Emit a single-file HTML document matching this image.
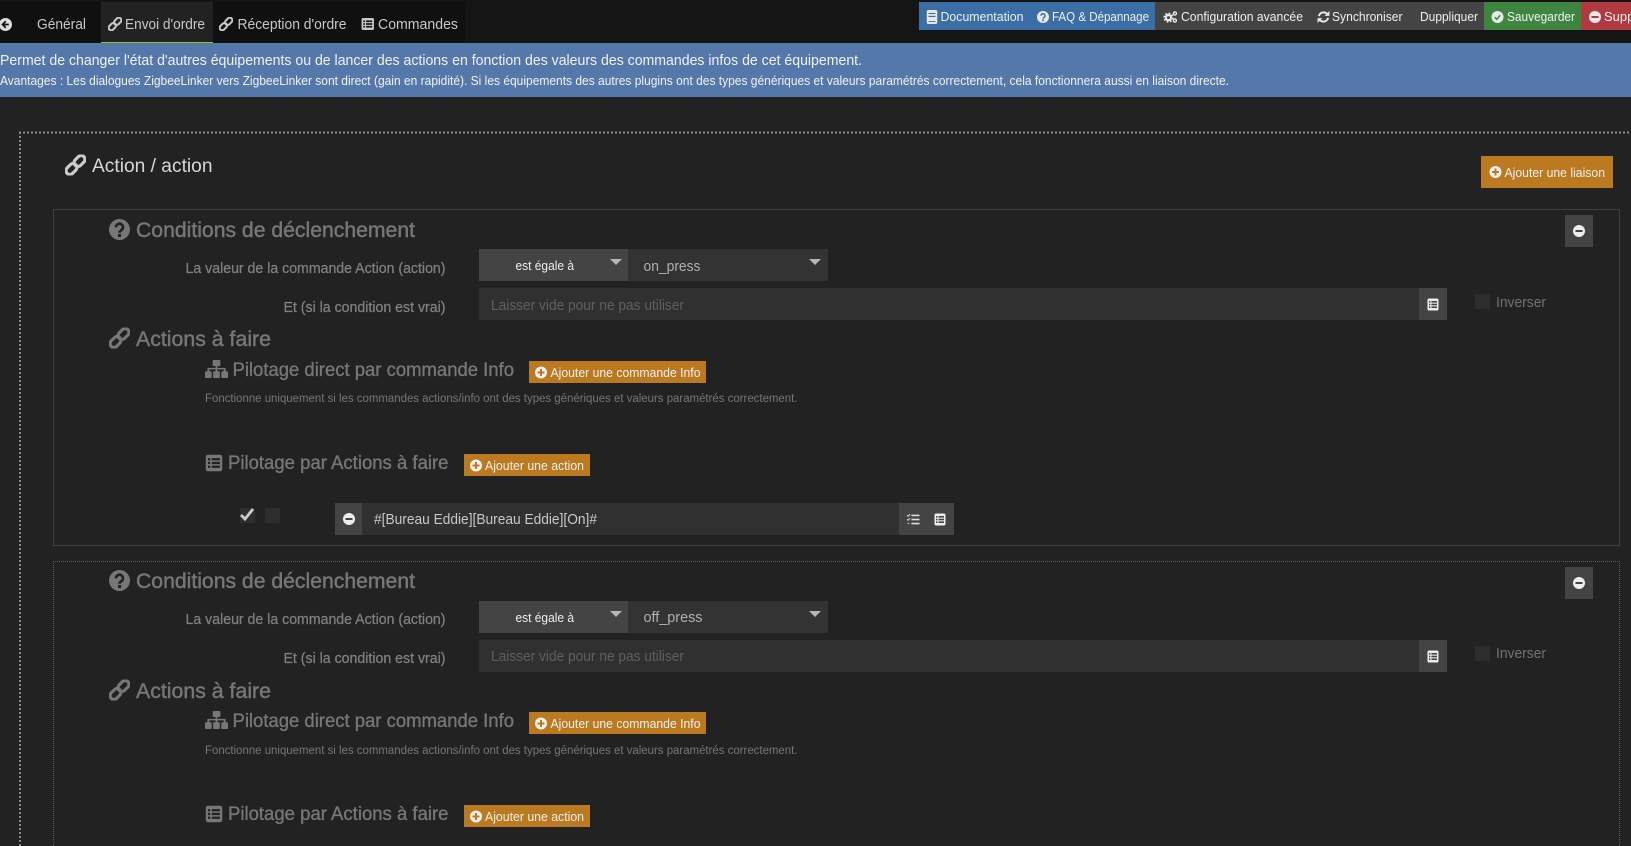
<!DOCTYPE html>
<html lang="fr"><head><meta charset="utf-8"><title>Envoi d'ordre</title>
<style>
html,body{margin:0;padding:0;background:#222;width:1631px;height:846px;overflow:hidden}
svg{display:block}
text{font-family:"Liberation Sans",Arial,sans-serif;white-space:pre}
.h{font-size:21.5px;fill:#777;stroke:#777;stroke-width:.45}
.s{font-size:19px;fill:#777;stroke:#777;stroke-width:.35}
.l{font-size:14.5px;fill:#808080;stroke:#808080;stroke-width:.25}
.b{font-size:13px;fill:#f0f0f0}
.t{font-size:15px;fill:#c8c8c8}
.p{font-size:15px;fill:#5f5f5f}
.n{font-size:11.5px;fill:#777}
.i{font-size:15px;fill:#727272}
.v{font-size:15px;fill:#b0b0b0}
.e{font-size:13px;fill:#eee}
</style></head><body>
<svg xmlns="http://www.w3.org/2000/svg" width="1631" height="846" viewBox="0 0 1631 846">
<defs>
<symbol id="link" viewBox="0 0 24 24"><g fill="none" stroke="currentColor" stroke-width="3.6" transform="rotate(-45 12 12)"><rect x="-1.5" y="7.6" width="14" height="8.8" rx="4.4"/><rect x="11.5" y="7.6" width="14" height="8.8" rx="4.4"/></g></symbol>
<symbol id="q" viewBox="0 0 24 24"><circle cx="12" cy="12" r="12" fill="currentColor"/><path d="M8 9.5a4 4 0 1 1 6.3 3.2c-1.4.9-2.3 1.4-2.3 3" fill="none" stroke="var(--b)" stroke-width="3"/><rect x="10.3" y="17.2" width="3.4" height="3.4" fill="var(--b)"/></symbol>
<symbol id="plus" viewBox="0 0 24 24"><circle cx="12" cy="12" r="12" fill="currentColor"/><rect x="10" y="5" width="4" height="14" fill="var(--b)"/><rect x="5" y="10" width="14" height="4" fill="var(--b)"/></symbol>
<symbol id="minus" viewBox="0 0 24 24"><circle cx="12" cy="12" r="12" fill="currentColor"/><rect x="5" y="10" width="14" height="4" fill="var(--b)"/></symbol>
<symbol id="ok" viewBox="0 0 24 24"><circle cx="12" cy="12" r="12" fill="currentColor"/><path d="M6.5 12.5l4 4 7-8" fill="none" stroke="var(--b)" stroke-width="3"/></symbol>
<symbol id="back" viewBox="0 0 24 24"><circle cx="12" cy="12" r="12" fill="currentColor"/><path d="M12.5 6L6.5 12l6 6M7 12h11" fill="none" stroke="var(--b)" stroke-width="3.2"/></symbol>
<symbol id="list" viewBox="0 0 24 24" preserveAspectRatio="none"><rect x="1" y="1" width="22" height="22" rx="3" fill="currentColor"/><g fill="var(--b)"><rect x="4" y="5.5" width="3" height="3"/><rect x="9" y="5.5" width="11" height="3"/><rect x="4" y="10.5" width="3" height="3"/><rect x="9" y="10.5" width="11" height="3"/><rect x="4" y="15.5" width="3" height="3"/><rect x="9" y="15.5" width="11" height="3"/></g></symbol>
<symbol id="map" viewBox="0 0 24 24" preserveAspectRatio="none"><g fill="currentColor"><rect x="8" y="0" width="8" height="8" rx="1"/><rect x="0" y="15" width="7" height="9" rx="1"/><rect x="8.5" y="15" width="7" height="9" rx="1"/><rect x="17" y="15" width="7" height="9" rx="1"/></g><path d="M12 8v8M3.5 16v-4.5h17V16" fill="none" stroke="currentColor" stroke-width="2"/></symbol>
<symbol id="book" viewBox="0 0 24 24"><rect x="3" y="0" width="18" height="24" rx="3" fill="currentColor"/><g fill="var(--b)"><rect x="6" y="5" width="12" height="2"/><rect x="6" y="10" width="12" height="2"/><rect x="6" y="19" width="12" height="1.5"/></g></symbol>
<symbol id="cogs" viewBox="0 0 24 24"><g fill="none" stroke="currentColor"><circle cx="8.5" cy="13" r="4.5" stroke-width="4"/><circle cx="8.5" cy="13" r="7.5" stroke-width="2.5" stroke-dasharray="3 2.9"/><circle cx="19.5" cy="6" r="2.6" stroke-width="2.4"/><circle cx="19.5" cy="18" r="2.6" stroke-width="2.4"/></g></symbol>
<symbol id="sync" viewBox="0 0 24 24"><path d="M3.5 10.5a9 9 0 0 1 15-4.5M20.5 13.5a9 9 0 0 1-15 4.5" fill="none" stroke="currentColor" stroke-width="3.6"/><path d="M23 1v9h-9zM1 23v-9h9z" fill="currentColor"/></symbol>
<symbol id="tasks" viewBox="0 0 24 24"><g fill="currentColor"><rect x="9" y="3" width="15" height="3"/><rect x="9" y="10.5" width="15" height="3"/><rect x="9" y="18" width="15" height="3"/></g><path d="M1 4l2 2 3.5-4M1 11.5l2 2 3.5-4M2 19.5h3" fill="none" stroke="currentColor" stroke-width="1.8"/></symbol>
</defs>

<rect width="1631" height="846" fill="#222"/>
<rect width="1631" height="43" fill="#151515"/>
<rect x="0" y="2" width="465" height="41" fill="#101010"/>
<rect x="101" y="2" width="112" height="41" fill="#222"/>
<rect x="101" y="42" width="112" height="2" fill="#94c11f"/>
<rect y="43" width="1631" height="54" fill="#5578ab"/>

<use href="#back" x="-1" y="18" width="13" height="13" style="color:#ddd;--b:#101010"/>
<text class="t" x="37" y="29" textLength="49" lengthAdjust="spacingAndGlyphs">Général</text>
<use href="#link" x="108" y="17" width="14" height="14" style="color:#c8c8c8"/>
<text class="t" x="125" y="29" textLength="80" lengthAdjust="spacingAndGlyphs">Envoi d'ordre</text>
<use href="#link" x="219" y="17" width="14" height="14" style="color:#c8c8c8"/>
<text class="t" x="237.5" y="29" textLength="109" lengthAdjust="spacingAndGlyphs">Réception d'ordre</text>
<use href="#list" x="361" y="17.5" width="13.5" height="13" style="color:#c8c8c8;--b:#101010"/>
<text class="t" x="378" y="29" textLength="80" lengthAdjust="spacingAndGlyphs">Commandes</text>

<rect x="919" y="2" width="236" height="28" fill="#3a6ea5"/>
<rect x="1155" y="2" width="329" height="28" fill="#444"/>
<rect x="1484" y="2" width="97" height="28" fill="#3f8540"/>
<rect x="1581" y="2" width="50" height="28" fill="#b13a40"/>

<use href="#book" x="925" y="10" width="14" height="14" style="color:#e8e8e8;--b:#3a6ea5"/>
<text class="b" x="940.5" y="21" textLength="83" lengthAdjust="spacingAndGlyphs">Documentation</text>
<use href="#q" x="1037" y="11" width="12" height="12" style="color:#e8e8e8;--b:#3a6ea5"/>
<text class="b" x="1052" y="21" textLength="97" lengthAdjust="spacingAndGlyphs">FAQ &amp; Dépannage</text>
<use href="#cogs" x="1163" y="10" width="15" height="14" style="color:#e8e8e8"/>
<text class="b" x="1181" y="21" textLength="122" lengthAdjust="spacingAndGlyphs">Configuration avancée</text>
<use href="#sync" x="1317" y="10.5" width="13" height="13" style="color:#e8e8e8"/>
<text class="b" x="1332" y="21" textLength="70.5" lengthAdjust="spacingAndGlyphs">Synchroniser</text>
<text class="b" x="1420" y="21" textLength="58" lengthAdjust="spacingAndGlyphs">Duppliquer</text>
<use href="#ok" x="1491.5" y="11" width="12" height="12" style="color:#e8e8e8;--b:#3f8540"/>
<text class="b" x="1507" y="21" textLength="68" lengthAdjust="spacingAndGlyphs">Sauvegarder</text>
<use href="#minus" x="1589" y="11" width="12" height="12" style="color:#e8e8e8;--b:#b13a40"/>
<text class="b" x="1604" y="21" textLength="60" lengthAdjust="spacingAndGlyphs">Supprimer</text>

<text x="0" y="65" font-size="15" fill="#f2f2f2" textLength="862" lengthAdjust="spacingAndGlyphs">Permet de changer l'état d'autres équipements ou de lancer des actions en fonction des valeurs des commandes infos de cet équipement.</text>
<text x="0" y="85" font-size="12.8" fill="#f2f2f2" textLength="1229" lengthAdjust="spacingAndGlyphs">Avantages : Les dialogues ZigbeeLinker vers ZigbeeLinker sont direct (gain en rapidité). Si les équipements des autres plugins ont des types génériques et valeurs paramétrés correctement, cela fonctionnera aussi en liaison directe.</text>

<path d="M19 132.5H1631M20 132V846" fill="none" stroke="#8a8a8a" stroke-width="2" stroke-dasharray="2 2"/>
<use href="#link" x="65" y="154.5" width="21" height="21" style="color:#ccc"/>
<text x="92" y="172" font-size="19" fill="#d8d8d8" textLength="120.5" lengthAdjust="spacingAndGlyphs">Action / action</text>
<rect x="1481" y="156" width="132" height="32" fill="#bb7a20"/>
<use href="#plus" x="1489.5" y="166" width="12" height="12" style="color:#f0f0f0;--b:#bb7a20"/>
<text class="b" x="1504.5" y="177" textLength="100.5" lengthAdjust="spacingAndGlyphs">Ajouter une liaison</text>

<!-- Panel 1 -->
<path d="M53.5 209.5H1619.5V545.5H53.5Z" fill="none" stroke="#5e5e5e" stroke-width="1" stroke-dasharray="1 1"/>
<use href="#q" x="109" y="219" width="21" height="21" style="color:#777;--b:#222"/>
<text class="h" x="136" y="237" textLength="279" lengthAdjust="spacingAndGlyphs">Conditions de déclenchement</text>
<rect x="1565" y="215" width="28" height="32" fill="#444"/>
<use href="#minus" x="1573" y="225" width="12" height="12" style="color:#eee;--b:#444"/>
<text class="l" x="185.5" y="273" textLength="260" lengthAdjust="spacingAndGlyphs">La valeur de la commande Action (action)</text>
<rect x="479" y="249" width="149" height="32" fill="#444"/>
<text class="e" x="515.5" y="270" textLength="58.5" lengthAdjust="spacingAndGlyphs">est égale à</text>
<polygon points="610,259 622,259 616,265" fill="#b5b5b5"/>
<rect x="628" y="249" width="200" height="32" fill="#333"/>
<text class="v" x="643.5" y="271" textLength="57" lengthAdjust="spacingAndGlyphs">on_press</text>
<polygon points="809,259 821,259 815,265" fill="#b5b5b5"/>
<text class="l" x="283.5" y="312" textLength="162" lengthAdjust="spacingAndGlyphs">Et (si la condition est vrai)</text>
<rect x="479" y="288" width="940" height="32" fill="#303030"/>
<text class="p" x="491" y="310" textLength="193" lengthAdjust="spacingAndGlyphs">Laisser vide pour ne pas utiliser</text>
<rect x="1419" y="288" width="28" height="32" fill="#444"/>
<use href="#list" x="1427" y="298" width="12" height="13" style="color:#eee;--b:#444"/>
<rect x="1475" y="294" width="15" height="15" fill="#2e2e2e"/>
<text class="i" x="1496" y="307" textLength="50" lengthAdjust="spacingAndGlyphs">Inverser</text>
<use href="#link" x="109" y="327.5" width="21" height="21" style="color:#777"/>
<text class="h" x="136" y="346" textLength="135" lengthAdjust="spacingAndGlyphs">Actions à faire</text>
<use href="#map" x="205" y="360" width="23" height="18" style="color:#777"/>
<text class="s" x="232.5" y="376" textLength="281.5" lengthAdjust="spacingAndGlyphs">Pilotage direct par commande Info</text>
<rect x="529" y="361" width="177" height="22" fill="#bb7a20"/>
<use href="#plus" x="535" y="366.5" width="12" height="12" style="color:#f0f0f0;--b:#bb7a20"/>
<text class="b" x="550.5" y="377" textLength="150" lengthAdjust="spacingAndGlyphs">Ajouter une commande Info</text>
<text class="n" x="205" y="402" textLength="592.5" lengthAdjust="spacingAndGlyphs">Fonctionne uniquement si les commandes actions/info ont des types génériques et valeurs paramétrés correctement.</text>
<use href="#list" x="205" y="454" width="18" height="18" style="color:#777;--b:#222"/>
<text class="s" x="228" y="469" textLength="220.5" lengthAdjust="spacingAndGlyphs">Pilotage par Actions à faire</text>
<rect x="464" y="454" width="126" height="22" fill="#bb7a20"/>
<use href="#plus" x="470" y="459.5" width="12" height="12" style="color:#f0f0f0;--b:#bb7a20"/>
<text class="b" x="485" y="470" textLength="99" lengthAdjust="spacingAndGlyphs">Ajouter une action</text>
<rect x="240" y="508" width="15" height="15" fill="#2e2e2e"/>
<path d="M241 515l4 4 8-10" fill="none" stroke="#ccc" stroke-width="2.8"/>
<rect x="265" y="508" width="15" height="15" fill="#2e2e2e"/>
<rect x="335" y="503" width="619" height="32" fill="#303030"/>
<rect x="335" y="503" width="27" height="32" fill="#444"/>
<use href="#minus" x="343" y="513" width="12" height="12" style="color:#eee;--b:#444"/>
<text class="t" x="374" y="524" textLength="223" lengthAdjust="spacingAndGlyphs">#[Bureau Eddie][Bureau Eddie][On]#</text>
<rect x="899" y="503" width="55" height="32" fill="#444"/>
<use href="#tasks" x="906.5" y="513" width="13" height="13" style="color:#ddd"/>
<use href="#list" x="934" y="513" width="12" height="13" style="color:#eee;--b:#444"/>

<!-- Panel 2 -->
<path d="M53.5 846V561.5H1619.5V846" fill="none" stroke="#5e5e5e" stroke-width="1" stroke-dasharray="1 1"/>
<use href="#q" x="109" y="570" width="21" height="21" style="color:#777;--b:#222"/>
<text class="h" x="136" y="588" textLength="279" lengthAdjust="spacingAndGlyphs">Conditions de déclenchement</text>
<rect x="1565" y="567" width="28" height="32" fill="#444"/>
<use href="#minus" x="1573" y="577" width="12" height="12" style="color:#eee;--b:#444"/>
<text class="l" x="185.5" y="624" textLength="260" lengthAdjust="spacingAndGlyphs">La valeur de la commande Action (action)</text>
<rect x="479" y="601" width="149" height="32" fill="#444"/>
<text class="e" x="515.5" y="622" textLength="58.5" lengthAdjust="spacingAndGlyphs">est égale à</text>
<polygon points="610,611 622,611 616,617" fill="#b5b5b5"/>
<rect x="628" y="601" width="200" height="32" fill="#333"/>
<text class="v" x="643.5" y="622" textLength="59" lengthAdjust="spacingAndGlyphs">off_press</text>
<polygon points="809,611 821,611 815,617" fill="#b5b5b5"/>
<text class="l" x="283.5" y="663" textLength="162" lengthAdjust="spacingAndGlyphs">Et (si la condition est vrai)</text>
<rect x="479" y="640" width="940" height="32" fill="#303030"/>
<text class="p" x="491" y="661" textLength="193" lengthAdjust="spacingAndGlyphs">Laisser vide pour ne pas utiliser</text>
<rect x="1419" y="640" width="28" height="32" fill="#444"/>
<use href="#list" x="1427" y="650" width="12" height="13" style="color:#eee;--b:#444"/>
<rect x="1475" y="646" width="15" height="15" fill="#2e2e2e"/>
<text class="i" x="1496" y="658" textLength="50" lengthAdjust="spacingAndGlyphs">Inverser</text>
<use href="#link" x="109" y="679.5" width="21" height="21" style="color:#777"/>
<text class="h" x="136" y="698" textLength="135" lengthAdjust="spacingAndGlyphs">Actions à faire</text>
<use href="#map" x="205" y="711" width="23" height="18" style="color:#777"/>
<text class="s" x="232.5" y="727" textLength="281.5" lengthAdjust="spacingAndGlyphs">Pilotage direct par commande Info</text>
<rect x="529" y="712" width="177" height="22" fill="#bb7a20"/>
<use href="#plus" x="535" y="717.5" width="12" height="12" style="color:#f0f0f0;--b:#bb7a20"/>
<text class="b" x="550.5" y="728" textLength="150" lengthAdjust="spacingAndGlyphs">Ajouter une commande Info</text>
<text class="n" x="205" y="754" textLength="592.5" lengthAdjust="spacingAndGlyphs">Fonctionne uniquement si les commandes actions/info ont des types génériques et valeurs paramétrés correctement.</text>
<use href="#list" x="205" y="805" width="18" height="18" style="color:#777;--b:#222"/>
<text class="s" x="228" y="820" textLength="220.5" lengthAdjust="spacingAndGlyphs">Pilotage par Actions à faire</text>
<rect x="464" y="805" width="126" height="22" fill="#bb7a20"/>
<use href="#plus" x="470" y="810.5" width="12" height="12" style="color:#f0f0f0;--b:#bb7a20"/>
<text class="b" x="485" y="821" textLength="99" lengthAdjust="spacingAndGlyphs">Ajouter une action</text>
</svg>
</body></html>
